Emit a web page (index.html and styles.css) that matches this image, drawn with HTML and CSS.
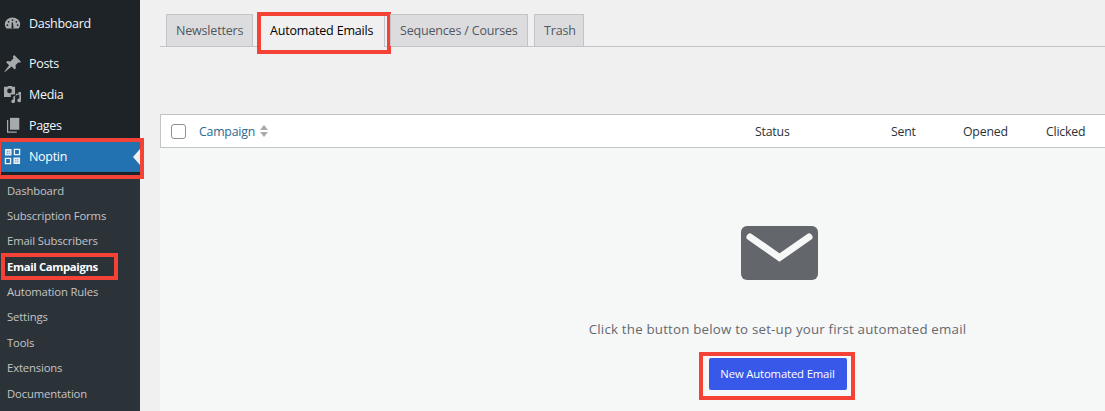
FILE: index.html
```html
<!DOCTYPE html>
<html lang="en">
<head>
<meta charset="utf-8">
<title>Noptin Automated Emails</title>
<link rel="stylesheet" href="styles.css">
</head>
<body>
<div class="app">
  <nav class="sidebar">
    <a class="menu-item first"><svg class="mi" viewBox="0 0 20 20"><path d="M10 3a9 8 0 0 0-9 8c0 2 .7 3.700 1.900 5h14.200A9 8 0 0 0 19 11a9 8 0 0 0-9-8zM10 5a1 1 0 1 1 0 2 1 1 0 0 1 0-2zM5.500 7a1 1 0 1 1 0 2 1 1 0 0 1 0-2zM14.500 7a1 1 0 1 1 0 2 1 1 0 0 1 0-2zM4 11a1 1 0 1 1 0 2 1 1 0 0 1 0-2zM16 11a1 1 0 1 1 0 2 1 1 0 0 1 0-2zM9 9l1.500-.5.500 5a1.300 1.300 0 1 1-2 0z" fill-rule="evenodd"/></svg>Dashboard</a>
    <a class="menu-item gap"><svg class="mi" viewBox="0 0 20 20"><path d="M12 0l8 8-1.500 1-1.500-.5-3.500 3.500.5 3.500-1.500 1.500-3.500-3.500L1 20l-.5-.5 5.500-7.500-3.500-3.500L4 7l3.500.5L11 4 10.500 1.500z"/></svg>Posts</a>
    <a class="menu-item"><svg class="mi" viewBox="0 0 20 20"><path d="M0 1h4l1-1h4l1 1h3v9H8v3H0zM6.500 3a2.800 2.800 0 1 0 0 5.600 2.800 2.800 0 0 0 0-5.600z" fill-rule="evenodd"/><path d="M20 7v10a2.200 2.200 0 1 1-2-2.200V10l-5 1.500V18a2.200 2.200 0 1 1-2-2.200V12h3v-3h3V7z"/></svg>Media</a>
    <a class="menu-item"><svg class="mi" viewBox="0 0 20 20"><path d="M7 1h11v14H7z"/><path d="M5 3.500V17h10v1.500H3.500v-15z"/></svg>Pages</a>
    <div class="noptin-wrap">
      <a class="menu-item current"><svg class="mi noptin-icon" viewBox="1 1 18 18"><path d="M12 2.500h5.500V8H12zM2.500 12H8v5.500H2.500z" fill="none" stroke="#f0f6fc" stroke-width="1.400"/><path d="M2 2h7v7H2zM11 11h7v7h-7z" fill="#e8eef5"/><path d="M4 4h1v1H4zM6 6h1v1H6zM13 13h1v1h-1zM15 15h1v1h-1zM6 4h1v1H6zM4 6h1v1H4zM15 13h1v1h-1zM13 15h1v1h-1z" fill="#2271b1"/></svg>Noptin<span class="arrow"></span></a>
      <span class="mark mark-noptin"></span>
    </div>
    <ul class="submenu">
      <li>Dashboard</li>
      <li>Subscription Forms</li>
      <li>Email Subscribers</li>
      <li class="sub-current">Email Campaigns<span class="mark mark-campaigns"></span></li>
      <li>Automation Rules</li>
      <li>Settings</li>
      <li>Tools</li>
      <li>Extensions</li>
      <li>Documentation</li>
    </ul>
  </nav>
  <main class="main">
    <div class="tabs">
      <a class="tab">Newsletters</a>
      <a class="tab active">Automated Emails<span class="mark mark-tab"></span></a>
      <a class="tab">Sequences / Courses</a>
      <a class="tab">Trash</a>
    </div>
    <div class="table-head">
      <span class="check"></span>
      <a class="campaign">Campaign</a>
      <span class="sort"><i class="up"></i><i class="down"></i></span>
      <span class="col col-status">Status</span>
      <span class="col col-sent">Sent</span>
      <span class="col col-opened">Opened</span>
      <span class="col col-clicked">Clicked</span>
    </div>
    <section class="empty">
      <svg class="envelope" viewBox="0 0 77 54"><rect width="77" height="54" rx="6" fill="#63676c"/><path d="M9 11l29.500 20.500L68 11" fill="none" stroke="#f6f7f7" stroke-width="7" stroke-linecap="round" stroke-linejoin="miter"/></svg>
      <p class="hint">Click the button below to set-up your first automated email</p>
      <a class="button">New Automated Email<span class="mark mark-button"></span></a>
    </section>
  </main>
</div>
</body>
</html>
```
FILE: styles.css
```css
* { box-sizing: border-box; }
html, body { margin: 0; height: 411px; overflow: hidden; }
body { background: #f0f0f1; font-family: "Open Sans", "Noto Sans", sans-serif; font-size: 12px; color: #3c434a; }
.app { display: flex; height: 411px; }

.sidebar { width: 140px; flex: none; background: #1d2327; display: flex; flex-direction: column; color: #f0f6fc; }
.menu-item { display: flex; align-items: center; height: 31px; font-size: 12.500px; letter-spacing: -0.3px; color: #f0f6fc; position: relative; }
.menu-item.first { margin-top: 8px; }
.menu-item.gap { margin-top: 9px; }
.mi { width: 17px; height: 17px; margin: 0 8px 0 4px; fill: #a7aaad; flex: none; }
.noptin-wrap { position: relative; padding-bottom: 3.500px; }
.current { background: #2271b1; height: 31px; color: #fff; }
.noptin-icon { fill: none; }
.arrow { position: absolute; right: 0; top: 8px; border: 8px solid transparent; border-left-width: 0; border-right: 7px solid #f0f0f1; }

.submenu { list-style: none; margin: 2px 0 0; padding: 0 0 0 7px; background: #2c3338; flex: 1; font-size: 11.300px; letter-spacing: -0.15px; color: #c3c4c7; }
.submenu li { height: 25.400px; line-height: 25.400px; white-space: nowrap; position: relative; }
.sub-current { color: #fff; font-weight: 700; letter-spacing: -0.35px; }

.main { flex: 1; min-width: 0; padding: 14px 0 0 20px; display: flex; flex-direction: column; }
.tabs { display: flex; height: 33px; padding-left: 6px; gap: 6px; border-bottom: 1px solid #c3c4c7; }
.tab { height: 32px; padding: 0 9px; line-height: 31px; font-size: 12.500px; letter-spacing: -0.18px; color: #50575e; background: #dcdcde; border: 1px solid #c3c4c7; border-bottom: 0; position: relative; white-space: nowrap; }
.tab:nth-child(1) { width: 87px; }
.tab:nth-child(2) { width: 125px; margin-left: 1px; color: #000; background: #f0f0f1; height: 33px; margin-bottom: -1px; }
.tab:nth-child(3) { width: 138px; margin-left: -1px; }
.tab:nth-child(4) { width: 50px; }

.table-head { margin-top: 67px; height: 34px; flex: none; background: #fff; border: 1px solid #c3c4c7; border-right: 0; display: flex; align-items: center; font-size: 12.300px; letter-spacing: -0.2px; color: #2c3338; position: relative; }
.check { width: 15px; height: 15px; margin-left: 10px; border: 1px solid #8c8f94; border-radius: 3px; background: #fff; flex: none; }
.campaign { margin-left: 13px; color: #2a6a92; }
.sort { display: flex; flex-direction: column; gap: 2px; margin-left: 5px; }
.sort i { display: block; border: 4.500px solid transparent; border-top: 0; border-bottom: 5px solid #a7aaad; }
.sort .down { border-bottom: 0; border-top: 5px solid #a7aaad; }
.col { position: absolute; top: 7.500px; line-height: 17px; }
.col-status { left: 594px; }
.col-sent { left: 730px; }
.col-opened { left: 802px; }
.col-clicked { left: 885px; }

.empty { flex: 1; background: #f6f7f7; display: flex; flex-direction: column; align-items: center; padding: 78px 0 0 290px; }
.envelope { width: 77px; height: 54px; margin-left: 4px; display: block; }
.hint { margin: 39px 0 0; font-size: 13.300px; line-height: 20px; letter-spacing: 0.2px; color: #646970; }
.button { margin-top: 19px; width: 138px; height: 32px; line-height: 31px; text-align: center; background: #3858e9; border-radius: 2px; color: #fff; font-size: 11.300px; letter-spacing: -0.15px; position: relative; white-space: nowrap; }

.mark { position: absolute; border: 4px solid #f44336; pointer-events: none; }
.mark-noptin { left: -3px; top: -3px; width: 147px; height: 41px; }
.mark-campaigns { left: -6px; top: -1px; width: 117px; height: 27px; }
.mark-tab { left: -4px; top: -3px; width: 134px; height: 42px; }
.mark-button { left: -10px; top: -6px; width: 156px; height: 48px; }
```
